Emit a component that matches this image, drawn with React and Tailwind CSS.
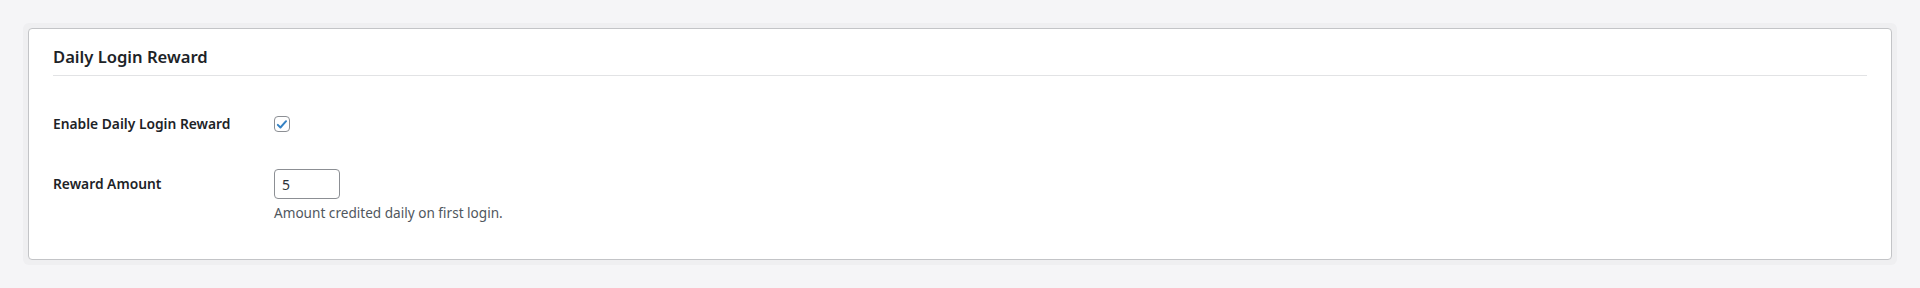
import React from 'react';

export default function App() {
  return (
    <div className="min-h-[288px] bg-[#f5f5f7] px-[23px] pt-[23px] pb-[24px] font-['Noto_Sans',sans-serif] text-[#1d2327]">
      <div className="rounded-[6px] bg-[#efeff1] p-[5px]">
        <div className="rounded-[4px] border border-[#c3c4c7] bg-white px-[24px] pt-[16px] pb-[37px]">
          <h2 className="border-b border-[#e2e3e5] pb-[6px] text-[16.6px] font-semibold leading-[24px]">
            Daily Login Reward
          </h2>

          <div className="pt-[40px]">
            <div className="flex items-center">
              <div className="w-[221px] text-[13.8px] font-semibold leading-[16px]">Enable Daily Login Reward</div>
              <span className="flex h-4 w-4 items-center justify-center rounded-[4px] border border-[#8c8f94] bg-white">
                <svg viewBox="0 0 20 20" className="h-[15px] w-[15px]" fill="none">
                  <path d="M4 10.5l3.8 3.8 8-9" stroke="#3582c4" strokeWidth="2.8" strokeLinecap="round" strokeLinejoin="round" />
                </svg>
              </span>
            </div>

            <div className="mt-[37px] flex items-start">
              <div className="w-[221px] text-[13.8px] font-semibold leading-[30px]">Reward Amount</div>
              <div>
                <div className="flex h-[30px] w-[66px] items-center rounded-[4px] border border-[#8c8f94] bg-white px-[7px] text-[14px] text-[#2c3338]">
                  5
                </div>
                <p className="mt-[5px] text-[13.6px] leading-[18px] text-[#50575e]">Amount credited daily on first login.</p>
              </div>
            </div>
          </div>
        </div>
      </div>
    </div>
  );
}
